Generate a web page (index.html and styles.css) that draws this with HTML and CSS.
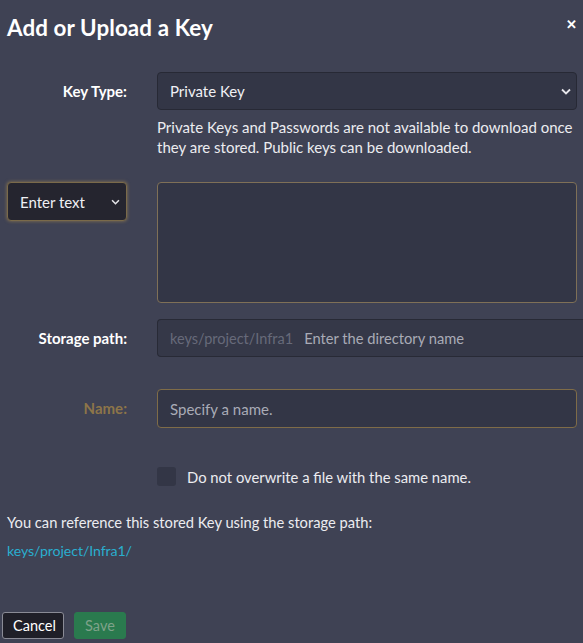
FILE: index.html
```html
<!DOCTYPE html>
<html>
<head>
<meta charset="utf-8">
<link rel="stylesheet" href="styles.css">
</head>
<body>
<div class="modal">
  <div class="header">
    <h1 class="title">Add or Upload a Key</h1>
    <span class="close">&#x2715;</span>
  </div>
  <div class="form">
    <div class="label">Key Type:</div>
    <div class="field">
      <div class="select">
        <span>Private Key</span>
        <svg class="chev" width="10" height="7" viewBox="0 0 10 7"><path d="M1 1.5 L5 5.5 L9 1.5" fill="none" stroke="#e6e6ea" stroke-width="1.8"/></svg>
      </div>
      <p class="help">Private Keys and Passwords are not available to download once they are stored. Public keys can be downloaded.</p>
    </div>

    <div class="label-cell">
      <div class="mode-select">
        <span>Enter text</span>
        <svg class="chev" width="9" height="6" viewBox="0 0 10 7"><path d="M1 1.5 L5 5.5 L9 1.5" fill="none" stroke="#e6e6ea" stroke-width="1.8"/></svg>
      </div>
    </div>
    <div class="field"><div class="textarea"></div></div>

    <div class="label path-label">Storage path:</div>
    <div class="field">
      <div class="path-group">
        <span class="prefix">keys/project/Infra1</span>
        <span class="path-ph">Enter the directory name</span>
      </div>
    </div>

    <div class="label name-label">Name:</div>
    <div class="field"><div class="input name-input">Specify a name.</div></div>

    <div></div>
    <div class="field check-row">
      <span class="checkbox"></span>
      <span class="check-text">Do not overwrite a file with the same name.</span>
    </div>
  </div>

  <p class="ref-text">You can reference this stored Key using the storage path:</p>
  <p class="ref-link">keys/project/Infra1/</p>

  <div class="footer">
    <button class="btn btn-cancel">Cancel</button>
    <button class="btn btn-save">Save</button>
  </div>
</div>
</body>
</html>
```
FILE: styles.css
```css
html, body {
  margin: 0;
  padding: 0;
  background: #3f4254;
  width: 583px;
  height: 643px;
  overflow: hidden;
}
body {
  font-family: Lato, "Noto Sans", sans-serif;
  color: #e8e8ee;
  font-size: 15px;
}
.modal {
  padding: 0 6px 0 7px;
}
.header {
  display: flex;
  justify-content: space-between;
  align-items: center;
  height: 54px;
}
.title {
  margin: 0;
  font-size: 22.4px;
  font-weight: 700;
  color: #ffffff;
  letter-spacing: 0.1px;
}
.close {
  font-size: 13px;
  font-weight: 700;
  color: #ffffff;
  margin-top: -6px;
}
.form {
  display: grid;
  grid-template-columns: 120px 1fr;
  column-gap: 30px;
  margin-top: 18px;
}
.label {
  text-align: right;
  font-weight: 700;
  font-size: 15px;
  color: #ffffff;
  height: 38px;
  line-height: 38px;
}
.path-label {
  margin-top: 16px;
}
.name-label {
  color: #8d7549;
  margin-top: 32px;
}
.label-cell {
  margin-top: 25px;
}
.select {
  height: 38px;
  box-sizing: border-box;
  background: #333646;
  border: 1px solid #272935;
  border-radius: 4px;
  display: flex;
  align-items: center;
  justify-content: space-between;
  padding: 0 5px 0 12px;
  color: #f0f0f4;
}
.help {
  margin: 7px 0 0;
  font-size: 15px;
  line-height: 20px;
  color: #ececf0;
}
.mode-select {
  height: 39px;
  box-sizing: border-box;
  background: #25252f;
  border: 1px solid #7a6a4a;
  box-shadow: 0 0 3px 1px rgba(150, 125, 80, 0.55);
  border-radius: 4px;
  display: flex;
  align-items: center;
  justify-content: space-between;
  padding: 0 6px 0 12px;
  color: #f0f0f4;
  font-size: 15px;
}
.textarea {
  margin-top: 25px;
  height: 121px;
  box-sizing: border-box;
  background: #333646;
  border: 1px solid #7f7057;
  border-radius: 4px;
}
.path-group {
  margin-top: 16px;
  margin-right: -6px;
  height: 38px;
  box-sizing: border-box;
  background: #353848;
  border: 1px solid #282a36;
  border-right: none;
  border-radius: 4px 0 0 4px;
  display: flex;
  align-items: center;
  padding-left: 12px;
}
.prefix {
  color: #676a7a;
  font-size: 14.5px;
}
.path-ph {
  color: #a9abb6;
  margin-left: 11px;
  font-size: 14.7px;
}
.input {
  height: 39px;
  box-sizing: border-box;
  background: #333646;
  border-radius: 4px;
  display: flex;
  align-items: center;
  padding-left: 12px;
  font-size: 15px;
}
.name-input {
  margin-top: 32px;
  border: 1px solid #7f6c48;
  color: #a9abb6;
}
.check-row {
  display: flex;
  align-items: center;
  margin-top: 39px;
  height: 19px;
}
.checkbox {
  width: 19px;
  height: 19px;
  box-sizing: border-box;
  background: #333646;
  border-radius: 3px;
  flex: none;
}
.check-text {
  margin-left: 11px;
  font-size: 14.8px;
  color: #ececf0;
}
.ref-text {
  margin: 26px 0 0;
  font-size: 14.7px;
  line-height: 20px;
  color: #ececf0;
}
.ref-link {
  margin: 9px 0 0;
  font-size: 14.2px;
  line-height: 20px;
  color: #2aaecf;
  letter-spacing: -0.1px;
}
.footer {
  display: flex;
  gap: 10px;
  margin-top: 51px;
  margin-left: -5px;
}
.btn {
  font-family: Lato, "Noto Sans", sans-serif;
  font-size: 14.5px;
  height: 27px;
  box-sizing: border-box;
  border-radius: 3px;
  padding: 0 10px;
}
.btn-cancel {
  background: #1f1f28;
  border: 1px solid #8a8b96;
  color: #ffffff;
  width: 62px;
}
.btn-save {
  background: #2a7a4e;
  border: 1px solid #2a7a4e;
  color: #7fa28a;
  width: 52px;
}
```
